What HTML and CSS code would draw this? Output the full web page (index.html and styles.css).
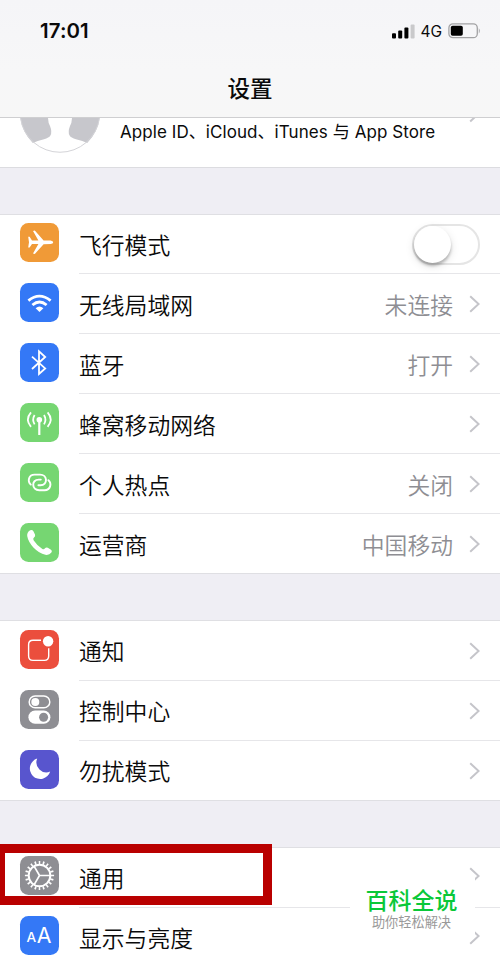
FILE: index.html
```html
<!DOCTYPE html>
<html lang="zh-CN">
  <head>
    <meta charset="UTF-8" />
    <meta name="viewport" content="width=device-width, initial-scale=1.0" />
    <title>设置</title>
    <link rel="stylesheet" href="styles.css">
  </head>
  <body>
    <svg class="defs" width="0" height="0">
      <symbol id="chevron" viewBox="0 0 12 18">
        <path d="M2.2 1.2 L10.6 9 L2.2 16.8" fill="none" stroke="#c5c5ca" stroke-width="2" />
      </symbol>
    </svg>

    <div class="phone">
      <header class="header">
        <div class="status">
          <span class="time">17:01</span>
          <div class="status-right">
            <svg width="23" height="15" viewBox="0 0 23 15">
              <rect x="0" y="9.2" width="4" height="5.3" rx="1" />
              <rect x="6.2" y="6.4" width="4" height="8.1" rx="1" />
              <rect x="12.4" y="3.6" width="4" height="10.9" rx="1" />
              <rect x="18.6" y="0.5" width="4" height="14" rx="1" fill="#c9c9cb" />
            </svg>
            <span class="network">4G</span>
            <svg width="33" height="16" viewBox="0 0 33 16">
              <rect x="0.9" y="0.9" width="28.4" height="13.8" rx="4" fill="none" stroke="#a2a2a4" stroke-width="1.3" />
              <rect x="2.8" y="2.8" width="12" height="10" rx="1.8" />
              <path d="M30.8 5.2 Q32.8 7.8 30.8 10.4 Z" fill="#a2a2a4" />
            </svg>
          </div>
        </div>
        <h1 class="title">设置</h1>
      </header>

      <!-- Account, scrolled under the header -->
      <section class="account">
        <svg class="avatar" width="80" height="36" viewBox="0 0 80 36">
          <path d="M0.4 0 A40 40 0 0 0 79.6 0" fill="#fff" />
          <path d="M0.4 0 H28 Q28.2 5 30 8 Q32.4 14 30.4 17.6 Q29 20 24 21.2 Q17 22.6 12.8 25 Q2 14 0.4 0 Z" fill="#c7c7cc" />
          <path d="M79.6 0 H52 Q51.8 5 50 8 Q47.6 14 49.6 17.6 Q51 20 56 21.2 Q63 22.6 67.2 25 Q78 14 79.6 0 Z" fill="#c7c7cc" />
          <path d="M0.5 0 A39.9 39.9 0 0 0 79.5 0" fill="none" stroke="#d4d4d8" />
        </svg>
        <span class="account-text">Apple ID、iCloud、iTunes 与 App Store</span>
        <svg class="account-chevron" width="12" height="5" viewBox="0 0 12 5">
          <path d="M2.2 3.4 L7 -1" fill="none" stroke="#c5c5ca" stroke-width="2" />
        </svg>
      </section>

      <ul class="group connections">
        <li class="row">
          <svg class="icon orange" viewBox="0 0 39 39">
            <path d="M8.2 13.8 L9.6 13.8 L12 17.6 L18.4 17.6 L13 8 L14.8 7.6 L23.6 17.4 L30.6 17.5 Q33.2 17.9 33.2 19.3 Q33.2 20.7 30.6 21.1 L23.6 21.2 L14.8 31 L13 30.6 L18.4 21 L12 21 L9.6 24.6 L8.2 24.6 L9 19.3 Z" fill="#fff" />
          </svg>
          <div class="cell">
            <span class="label">飞行模式</span>
            <span class="switch"></span>
          </div>
        </li>
        <li class="row">
          <svg class="icon blue" viewBox="0 0 39 39">
            <g fill="none" stroke="#fff" stroke-width="2.8">
              <path d="M8.4 17.6 Q19.4 8.6 30.6 17.6" />
              <path d="M12.4 22 Q19.5 16 26.6 22" />
            </g>
            <path d="M15.6 25.3 Q19.5 21.8 23.4 25.3 L19.5 29 Z" fill="#fff" />
          </svg>
          <div class="cell">
            <span class="label">无线局域网</span>
            <span class="value">未连接</span>
            <svg class="chevron"><use href="#chevron" /></svg>
          </div>
        </li>
        <li class="row">
          <svg class="icon blue" viewBox="0 0 39 39">
            <path d="M12 13.6 L25.2 25.4 L19 31 L19 8.4 L25.2 14 L12 26" fill="none" stroke="#fff" stroke-width="1.8" />
          </svg>
          <div class="cell">
            <span class="label">蓝牙</span>
            <span class="value">打开</span>
            <svg class="chevron"><use href="#chevron" /></svg>
          </div>
        </li>
        <li class="row">
          <svg class="icon green" viewBox="0 0 39 39">
            <circle cx="19.3" cy="16.7" r="2.8" fill="#fff" />
            <g fill="none" stroke="#fff" stroke-width="1.8">
              <path d="M19.3 17 V32" stroke-width="2.2" />
              <path d="M14.6 12 Q11.8 16.6 14.6 21.4" />
              <path d="M11 9.4 Q4.8 16.6 11 23.8" />
              <path d="M24 12 Q26.8 16.6 24 21.4" />
              <path d="M27.6 9.4 Q33.8 16.6 27.6 23.8" />
            </g>
          </svg>
          <div class="cell">
            <span class="label">蜂窝移动网络</span>
            <svg class="chevron"><use href="#chevron" /></svg>
          </div>
        </li>
        <li class="row">
          <svg class="icon green" viewBox="0 0 39 39">
            <g fill="none" stroke="#fff" stroke-width="1.9" stroke-linecap="round">
              <path d="M10.8 21.6 C7.2 18.4 8.6 11.6 14.6 11.6 H20 C27.6 11.6 28.2 22.2 20.4 22.2 H18.4" />
              <path d="M28.4 17.2 C32 20.4 30.6 27.2 24.6 27.2 H19.2 C11.6 27.2 11 16.6 18.8 16.6 H20.8" />
            </g>
          </svg>
          <div class="cell">
            <span class="label">个人热点</span>
            <span class="value">关闭</span>
            <svg class="chevron"><use href="#chevron" /></svg>
          </div>
        </li>
        <li class="row">
          <svg class="icon green" viewBox="0 0 39 39">
            <path d="M10.2 7.3 Q12.2 6.2 13.4 8.2 L15 11.6 Q15.8 13.4 13.8 14.8 Q12.8 15.8 13.6 17.2 Q17 22.6 22.4 26 Q23.8 26.8 24.8 25.6 Q26 24 27.8 24.8 L31 26.8 Q32.6 28 31.4 29.6 Q29.2 32.4 25.4 31.8 Q19 30.2 13.4 24.4 Q8.2 18.8 7.2 13 Q6.8 9.2 10.2 7.3 Z" fill="#fff" />
          </svg>
          <div class="cell">
            <span class="label">运营商</span>
            <span class="value">中国移动</span>
            <svg class="chevron"><use href="#chevron" /></svg>
          </div>
        </li>
      </ul>

      <ul class="group">
        <li class="row">
          <svg class="icon red" viewBox="0 0 39 39">
            <path d="M21 10.3 H13 Q8.6 10.3 8.6 14.7 V26 Q8.6 30.4 13 30.4 H24.3 Q28.7 30.4 28.7 26 V18.2" fill="none" stroke="#fff" stroke-width="1.4" />
            <circle cx="28.1" cy="11.2" r="5.2" fill="#fff" />
          </svg>
          <div class="cell">
            <span class="label">通知</span>
            <svg class="chevron"><use href="#chevron" /></svg>
          </div>
        </li>
        <li class="row">
          <svg class="icon gray" viewBox="0 0 39 39">
            <rect x="9.2" y="6" width="20.6" height="11.8" rx="5.9" fill="none" stroke="#fff" stroke-width="1.5" />
            <circle cx="15.3" cy="11.9" r="4" fill="#fff" />
            <rect x="8.4" y="20.6" width="22" height="13.2" rx="6.6" fill="#fff" />
            <circle cx="23.6" cy="27.2" r="4.5" fill="#8e8e93" />
          </svg>
          <div class="cell">
            <span class="label">控制中心</span>
            <svg class="chevron"><use href="#chevron" /></svg>
          </div>
        </li>
        <li class="row">
          <svg class="icon purple" viewBox="0 0 39 39">
            <path d="M17.2 8.6 A10.4 10.4 0 1 0 30.2 21.6 A10 10 0 0 1 17.2 8.6 Z" fill="#fff" />
          </svg>
          <div class="cell">
            <span class="label">勿扰模式</span>
            <svg class="chevron"><use href="#chevron" /></svg>
          </div>
        </li>
      </ul>

      <ul class="group general">
        <li class="row">
          <svg class="icon gray" viewBox="0 0 39 39">
            <g fill="none" stroke="#fff">
              <circle cx="19.5" cy="19.5" r="10.8" stroke-width="2" />
              <circle cx="19.5" cy="19.5" r="13" stroke-width="3.2" pathLength="200" stroke-dasharray="3.8 6.2" stroke-dashoffset="1.9" />
              <path d="M19.5 19.5 H30 M19.5 19.5 L14.2 10.4 M19.5 19.5 L14.2 28.6" stroke-width="1.7" />
            </g>
          </svg>
          <div class="cell">
            <span class="label">通用</span>
            <svg class="chevron"><use href="#chevron" /></svg>
          </div>
        </li>
        <li class="row">
          <svg class="icon blue" viewBox="0 0 39 39">
            <text class="letter" x="6.6" y="25.5" font-size="13.6">A</text>
            <text class="letter big" x="16.8" y="27.2" font-size="21.3">A</text>
          </svg>
          <div class="cell">
            <span class="label">显示与亮度</span>
            <svg class="chevron"><use href="#chevron" /></svg>
          </div>
        </li>
      </ul>

      <div class="highlight"></div>
      <div class="badge">
        <strong class="badge-name">百科全说</strong>
        <span class="badge-text">助你轻松解决</span>
      </div>
    </div>
  </body>
</html>
```

FILE: styles.css
```css
/* Resets */
* {
  box-sizing: border-box;
}
body,
h1,
ul {
  margin: 0;
  padding: 0;
}
ul {
  list-style: none;
}
svg {
  display: block;
  flex-shrink: 0;
}
.defs {
  position: absolute;
}

/* Phone */
.phone {
  position: relative;
  width: 500px;
  height: 961px;
  overflow: hidden;
  background-color: #efeef4;
  color: #0a0a0a;
  font-family: Inter, "Noto Sans CJK SC", sans-serif;
}

/* Header */
.header {
  height: 118px;
  padding-top: 20px;
  border-bottom: 1px solid #cfcfd1;
  background: linear-gradient(#f5f5f8, #f7f7f8 60%, #f7f7f7);
}
.status {
  height: 22px;
  padding: 0 19px 0 40px;
  display: flex;
  align-items: center;
  justify-content: space-between;
}
.time {
  padding-bottom: 1px;
  font-size: 20.4px;
  font-weight: 600;
  letter-spacing: 0.1px;
}
.status-right {
  display: flex;
  align-items: center;
  gap: 6px;
}
.network {
  font-size: 15.5px;
  letter-spacing: -0.1px;
}
.title {
  margin-top: 31px;
  text-align: center;
  font-size: 22.5px;
  font-weight: 500;
  line-height: 32px;
}

/* Account */
.account {
  height: 50px;
  padding-left: 20px;
  display: flex;
  align-items: flex-start;
  background-color: #fff;
  border-bottom: 1px solid #dcdce0;
}
.account-text {
  margin-left: 20px;
  font-size: 17px;
  letter-spacing: 0.07px;
  line-height: 28px;
  white-space: nowrap;
}
.account-chevron {
  margin: 0 20px 0 auto;
}

/* Groups */
.group {
  margin-top: 46px;
  background-color: #fff;
  border-top: 1px solid #dfdfe3;
  border-bottom: 1px solid #dfdfe3;
}
.row {
  height: 60px;
  padding-left: 20px;
  display: flex;
  align-items: flex-start;
  gap: 20px;
}
.row:last-child,
.connections .row:first-child {
  height: 59px;
}
.cell {
  flex: 1;
  height: 100%;
  padding-right: 20px;
  display: flex;
  align-items: center;
  border-bottom: 1px solid #e6e6e9;
}
.row:last-child .cell {
  height: 60px;
  border-color: transparent;
}
.label,
.value {
  font-family: "Noto Sans CJK SC", sans-serif;
  font-size: 22.8px;
  font-weight: 350;
  line-height: 32px;
  padding-top: 1px;
}
.connections .label,
.connections .value {
  padding-top: 3px;
}
.connections .row:first-child .label {
  padding-top: 1px;
}
.value {
  color: #8e8e93;
}
.label {
  margin-right: auto;
}
.chevron {
  width: 12px;
  height: 18px;
  margin-left: 15px;
}
.general .chevron {
  margin-bottom: 4px;
}

/* Icons */
.icon {
  width: 39px;
  height: 39px;
  margin-top: 9px;
  border-radius: 8.5px;
}
.connections .row:first-child .icon,
.general .icon {
  margin-top: 8px;
}
.orange {
  background-color: #f09a37;
}
.blue {
  background-color: #3478f6;
}
.green {
  background-color: #76d672;
}
.red {
  background-color: #eb4e3d;
}
.gray {
  background-color: #8e8e93;
}
.purple {
  background-color: #5855ce;
}
.letter {
  fill: #fff;
  font-family: Inter, sans-serif;
  font-weight: 500;
}
.letter.big {
  font-weight: 400;
}

/* Switch */
.switch {
  width: 68px;
  height: 41px;
  border: 2px solid #e5e5e5;
  border-radius: 21px;
}
.switch::before {
  content: "";
  display: block;
  width: 37px;
  height: 37px;
  border-radius: 50%;
  background-color: #fff;
  box-shadow: 0 3px 3px rgba(0, 0, 0, 0.24), 0 3px 10px rgba(0, 0, 0, 0.12);
}

/* Overlays */
.highlight {
  position: absolute;
  left: 0;
  top: 844px;
  width: 272px;
  height: 61px;
  border: 9px solid #b90000;
  border-left-width: 5px;
}
.badge {
  position: absolute;
  left: 350px;
  top: 877px;
  width: 125px;
  height: 61px;
  padding: 6px 2px 0 0;
  display: flex;
  flex-direction: column;
  align-items: center;
  background-color: #fff;
  font-family: "Noto Sans CJK SC", sans-serif;
}
.badge-name {
  color: #0ac838;
  font-size: 23px;
  font-weight: 500;
  line-height: 32px;
}
.badge-text {
  color: #999;
  font-size: 13.2px;
  line-height: 14px;
}
```
